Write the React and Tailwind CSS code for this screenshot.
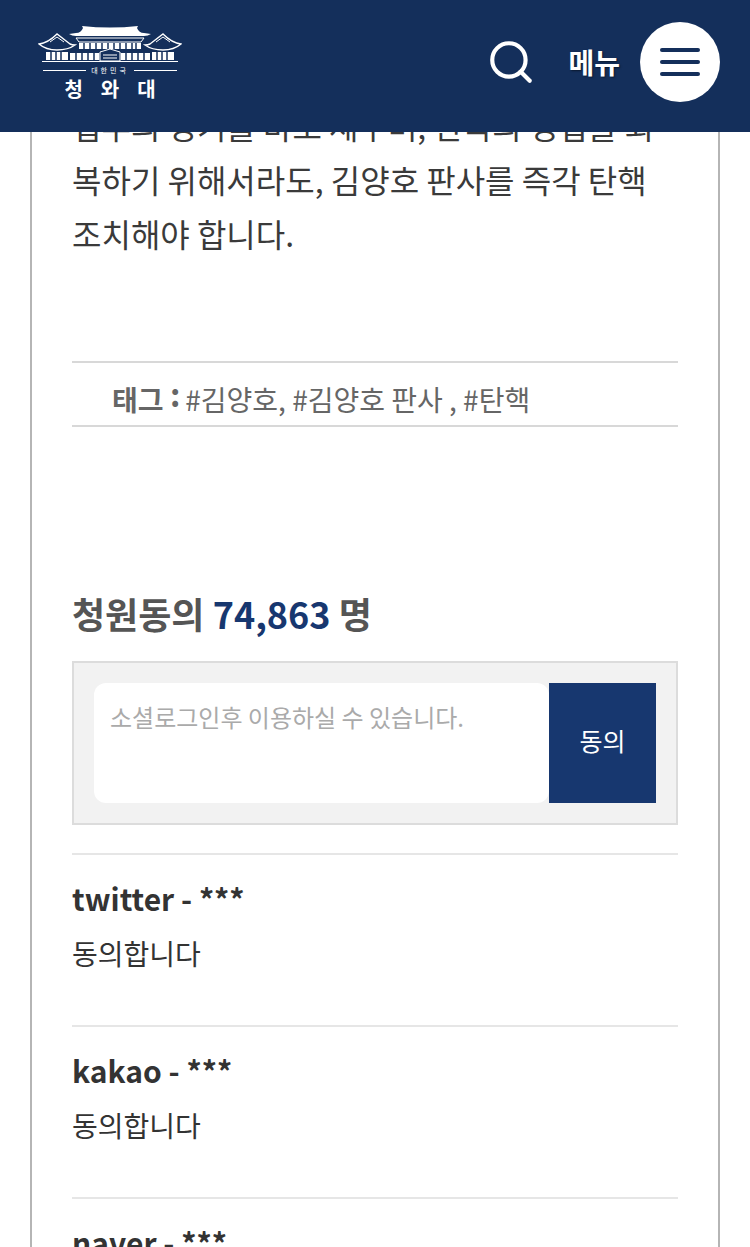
import React from 'react';
import { Search } from 'lucide-react';

const comments = [
  { name: 'twitter', body: '동의합니다' },
  { name: 'kakao', body: '동의합니다' },
  { name: 'naver', body: '동의합니다' },
];

function Logo() {
  const navy = '#142f5b';
  return (
    <div className="flex w-[144px] flex-col items-center text-white">
      <svg width="144" height="38" viewBox="0 0 144 38" fill="none">
        {/* center hall */}
        <path d="M44 1 Q72 4 100 1 L99 3 Q101 8 106 8 L113 9 Q110 11 106 11 H38 Q34 11 31 9 L38 8 Q43 8 45 3Z" fill="#fff" />
        <path d="M38 13 H106 L103 17 H41Z" stroke="#fff" strokeWidth="1" />
        <rect x="41" y="18" width="62" height="6" fill="#fff" />
        <path d="M46 18 V24 M52 18 V24 M58 18 V24 M64 18 V24 M70 18 V24 M76 18 V24 M82 18 V24 M88 18 V24 M94 18 V24 M98 18 V24" stroke={navy} strokeWidth="1.500" />
        <rect x="32" y="28" width="80" height="7" fill="#fff" />
        <path d="M38 28 V35 M44 28 V35 M50 28 V35 M56 28 V35 M62 28 V35 M82 28 V35 M88 28 V35 M94 28 V35 M100 28 V35 M106 28 V35" stroke={navy} strokeWidth="1.500" />
        <path d="M62 27 L72 24 L82 27 V36 H62Z" fill={navy} stroke="#fff" strokeWidth="1" />
        <path d="M65 30 H79 M65 33 H79" stroke="#fff" strokeWidth="1" />
        {/* side pavilions */}
        <path d="M1 19 Q10 18 19 9 L19 9 L32 19 Q34 20 37 20 Q30 25 19 25 Q8 25 1 19Z" stroke="#fff" strokeWidth="1.400" />
        <path d="M143 19 Q134 18 125 9 L112 19 Q110 20 107 20 Q114 25 125 25 Q136 25 143 19Z" stroke="#fff" strokeWidth="1.400" />
        <path d="M12 17 L19 12 L26 17" stroke="#fff" strokeWidth="1" />
        <path d="M118 17 L125 12 L132 17" stroke="#fff" strokeWidth="1" />
        <rect x="8" y="27" width="22" height="8" fill="#fff" />
        <rect x="114" y="27" width="22" height="8" fill="#fff" />
        <path d="M13 27 V35 M18 27 V35 M23 27 V35 M119 27 V35 M124 27 V35 M129 27 V35" stroke={navy} strokeWidth="1.500" />
        <path d="M4 36.500 H140" stroke="#fff" strokeWidth="1.200" />
      </svg>
      <div className="mt-[3px] flex w-full items-center">
        <span className="mx-[5px] h-px flex-1 bg-white" />
        <span className="text-[7px] leading-[9px] tracking-[3px]">대한민국</span>
        <span className="mx-[5px] h-px flex-1 bg-white" />
      </div>
      <div className="mt-[2px] pl-[18px] text-[20px] font-bold leading-[24px] tracking-[18px]">청와대</div>
    </div>
  );
}

function Header() {
  return (
    <header className="absolute inset-x-0 top-0 z-10 flex h-[132px] items-center justify-between bg-[#142f5b] pb-[8px] pl-[38px] pr-[30px]">
      <div className="mt-[1px]"><Logo /></div>
      <div className="flex items-center">
        <Search size={50} strokeWidth={2} className="mr-[32px] text-white" />
        <span className="mr-[20px] text-[28px] font-bold text-white [text-shadow:1px_1px_2px_rgba(0,0,0,0.5)]">메뉴</span>
        <button className="flex h-[80px] w-[80px] flex-col items-center justify-center gap-[8px] rounded-full bg-white">
          <span className="h-[4px] w-[40px] rounded-full bg-[#142f5b]" />
          <span className="h-[4px] w-[40px] rounded-full bg-[#142f5b]" />
          <span className="h-[4px] w-[40px] rounded-full bg-[#142f5b]" />
        </button>
      </div>
    </header>
  );
}

export default function App() {
  return (
    <div className="relative h-[1247px] overflow-hidden bg-white font-['Noto_Sans_CJK_KR','Noto_Sans',sans-serif] text-[#333]">
      <Header />
      <main className="mx-[30px] h-[1400px] border-x-2 border-[#b5b5b5] px-[40px] pt-[98px]">
        <p className="text-[32px] leading-[54px] text-[#3a3a3a]">
          법부의 정기를 바로 세우며, 한국의 정법을 회복하기 위해서라도, 김양호 판사를 즉각 탄핵 조치해야 합니다.
        </p>

        <div className="mt-[101px] flex h-[66px] items-center border-y-2 border-[#d8d8d8] pl-[40px] pt-[9px] text-[28px] text-[#666]">
          <b className="mr-[5px]">태그 <span className="relative top-[-4px] text-[32px] leading-none">:</span></b> #김양호, #김양호 판사 , #탄핵
        </div>

        <h3 className="mt-[159px] text-[36px] font-bold leading-[54px] text-[#555]">
          청원동의 <span className="text-[#17376f]">74,863</span> 명
        </h3>

        <div className="mt-[21px] flex border-2 border-[#dcdcdc] bg-[#f2f2f2] p-[20px]">
          <div className="h-[120px] flex-1 rounded-[12px] bg-white px-[16px] py-[16px] text-[24px] leading-[36px] text-[#aaa]">
            소셜로그인후 이용하실 수 있습니다.
          </div>
          <button className="h-[120px] w-[107px] bg-[#17376f] pb-[4px] text-[25px] text-white">동의</button>
        </div>

        <ul className="mt-[28px]">
          {comments.map((c) => (
            <li key={c.name} className="h-[172px] border-t-2 border-[#e6e6e6] pt-[19px]">
              <div className="text-[30px] font-bold leading-[48px]">{c.name} - ***</div>
              <div className="mt-[7px] text-[28px] leading-[48px]">{c.body}</div>
            </li>
          ))}
        </ul>
      </main>
    </div>
  );
}
